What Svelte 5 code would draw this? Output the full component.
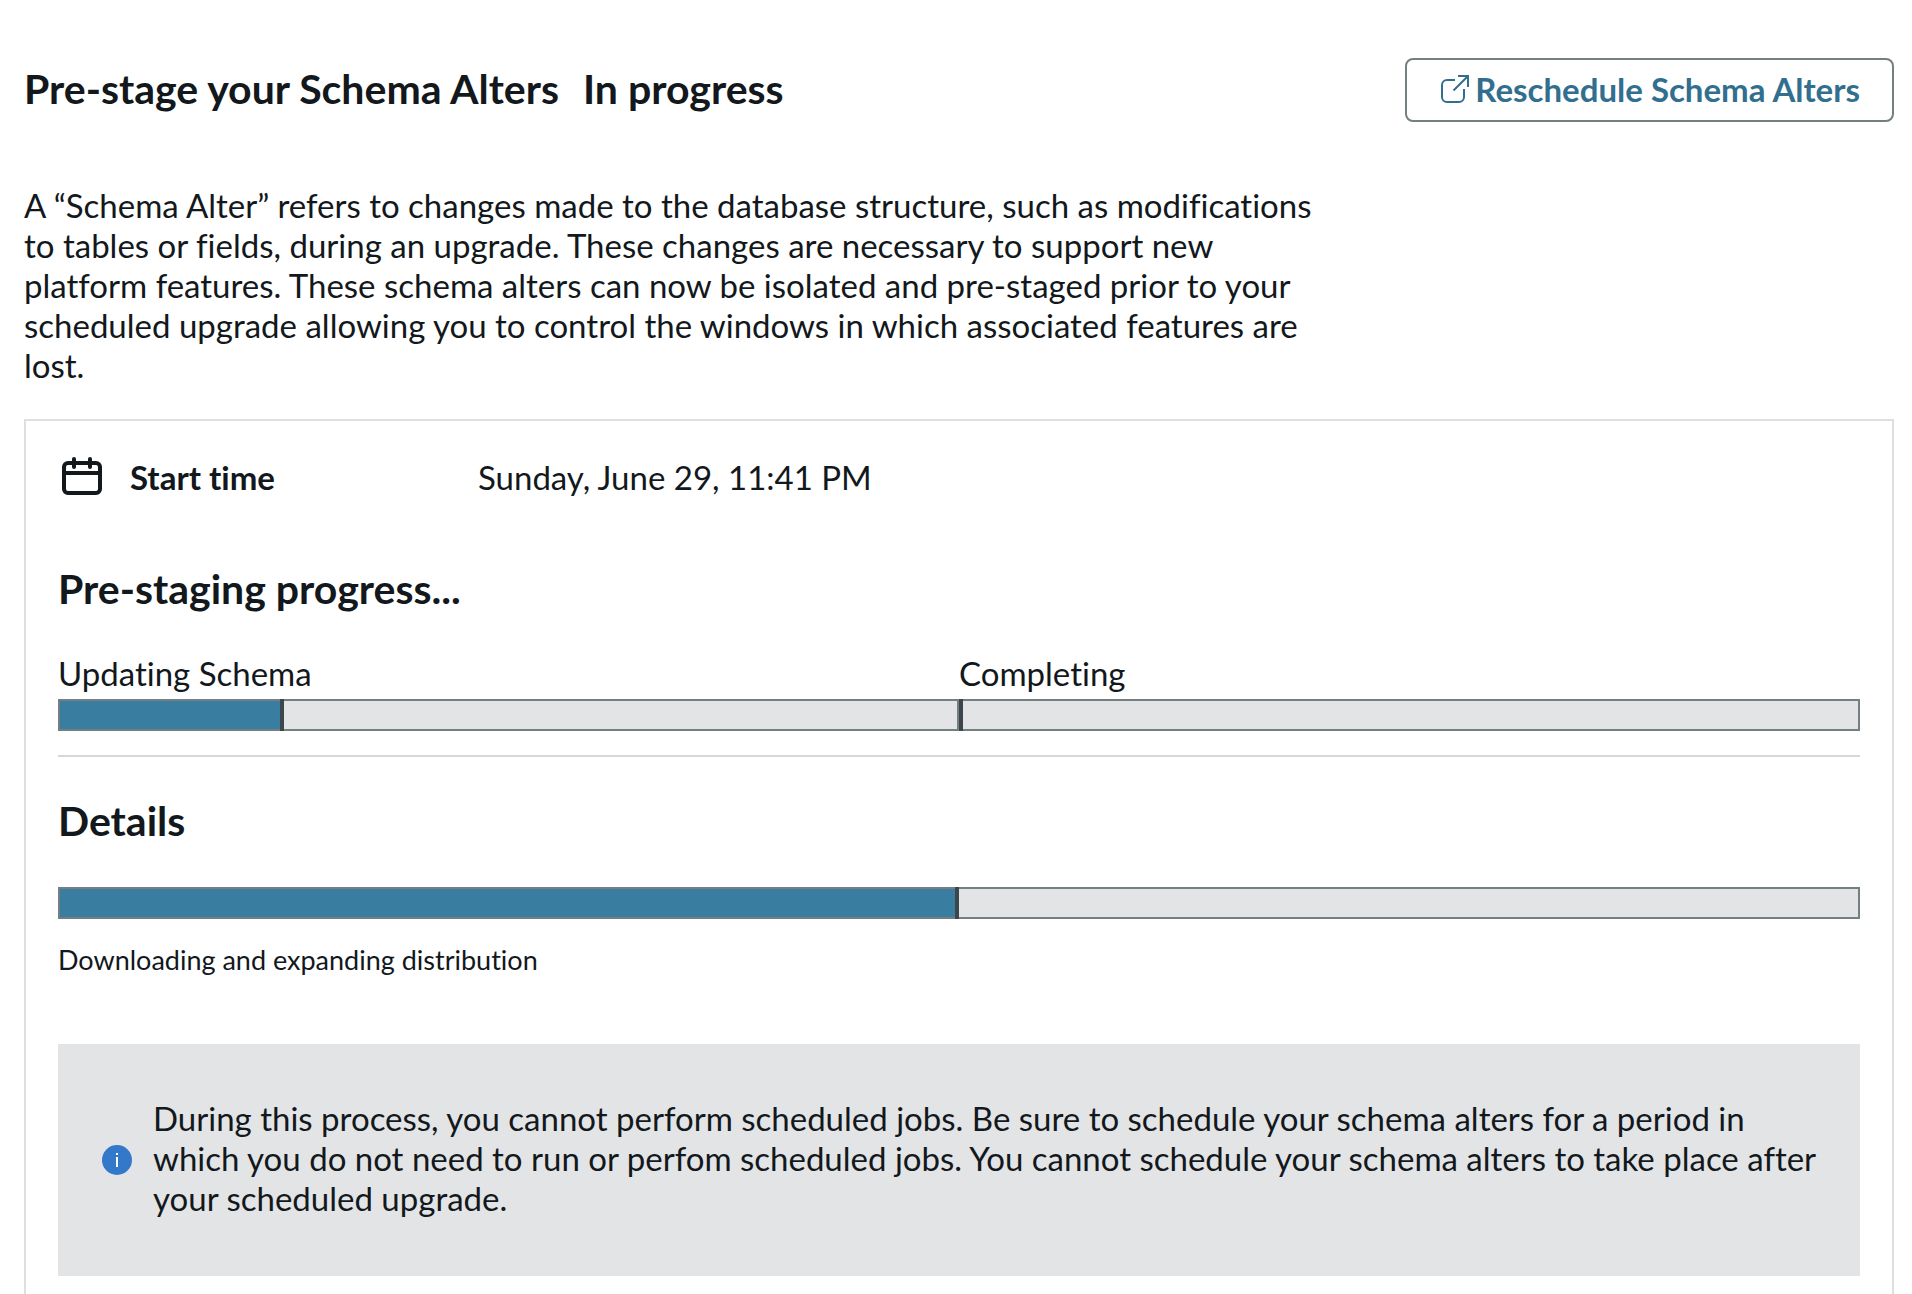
<script lang="ts">
  interface Stage {
    label: string;
    percent: number;
  }

  const stages: Stage[] = [
    { label: "Updating Schema", percent: 25 },
    { label: "Completing", percent: 0 }
  ];

  const details: Stage = { label: "Downloading and expanding distribution", percent: 50 };

  function reschedule() {
    window.dispatchEvent(new CustomEvent("reschedule"));
  }
</script>

{#snippet bar(stage: Stage)}
  <div
    class="bar"
    role="progressbar"
    aria-label={stage.label}
    aria-valuemin="0"
    aria-valuemax="100"
    aria-valuenow={stage.percent}
  >
    <div class="bar__fill" style:width="{stage.percent}%"></div>
    <div class="bar__marker" style:left="max(-2px, calc({stage.percent}% - 4px))"></div>
  </div>
{/snippet}

<main class="page">
  <header class="header">
    <div class="header__titles">
      <h1>Pre-stage your Schema Alters</h1>
      <span class="header__status">In progress</span>
    </div>
    <button class="reschedule" type="button" onclick={reschedule}>
      <svg width="28" height="28" viewBox="0 0 28 28" fill="none" stroke="currentColor" stroke-width="2" aria-hidden="true">
        <path d="M14 5H6a5 5 0 0 0-5 5v12a5 5 0 0 0 5 5h12a5 5 0 0 0 5-5v-8" />
        <path d="M17 1h10v11M27 1 12.5 15.5" />
      </svg>
      Reschedule Schema Alters
    </button>
  </header>

  <p class="intro">
    A “Schema Alter” refers to changes made to the database structure, such as modifications to
    tables or fields, during an upgrade. These changes are necessary to support new platform
    features. These schema alters can now be isolated and pre-staged prior to your scheduled
    upgrade allowing you to control the windows in which associated features are lost.
  </p>

  <section class="card">
    <dl class="start">
      <dt>
        <svg width="48" height="48" viewBox="0 0 48 48" fill="none" stroke="currentColor" stroke-width="4" aria-hidden="true">
          <rect x="6" y="10" width="36" height="30" rx="4" />
          <path d="M6 20h36" />
          <path d="M16 6v8M32 6v8" stroke-linecap="round" />
        </svg>
        Start time
      </dt>
      <dd>Sunday, June 29, 11:41 PM</dd>
    </dl>

    <h2>Pre-staging progress...</h2>
    <div class="stages">
      {#each stages as stage (stage.label)}
        <div class="stage">
          <span class="stage__label">{stage.label}</span>
          {@render bar(stage)}
        </div>
      {/each}
    </div>

    <hr />

    <h2>Details</h2>
    <div class="details">
      {@render bar(details)}
      <p class="details__text">{details.label}</p>
    </div>

    <div class="notice">
      <svg class="notice__icon" width="30" height="30" viewBox="0 0 30 30" aria-hidden="true">
        <circle cx="15" cy="15" r="15" fill="#3478c9" />
        <path d="M15 12v10M15 8v2" stroke="#fff" stroke-width="2" />
      </svg>
      <p>
        During this process, you cannot perform scheduled jobs. Be sure to schedule your schema
        alters for a period in which you do not need to run or perfom scheduled jobs. You cannot
        schedule your schema alters to take place after your scheduled upgrade.
      </p>
    </div>
  </section>
</main>

<style>
  :global(body) {
    background: #fff;
  }

  .page {
    padding: 58px 18px 0 24px;
    font-family: Lato, "Open Sans", sans-serif;
    font-size: 33px;
    font-variant-ligatures: none;
    line-height: 40px;
    color: #12181c;
  }

  .header {
    display: flex;
    align-items: center;
    justify-content: space-between;
    gap: 24px;
  }

  .header__titles {
    display: flex;
    flex-wrap: wrap;
    gap: 0 24px;
    padding-bottom: 2px;
  }

  h1,
  h2,
  .header__status {
    margin: 0;
    font-size: 41px;
    font-weight: 700;
    line-height: 48px;
  }

  .reschedule {
    display: flex;
    align-items: center;
    gap: 6px;
    padding: 9px 32px 11px 34px;
    border: 2px solid #747f82;
    border-radius: 8px;
    background: #fff;
    color: #326f8f;
    font: inherit;
    font-variant-ligatures: none;
    font-weight: 700;
    cursor: pointer;
  }

  .intro {
    width: 70%;
    margin: 63px 0 34px;
  }

  .card {
    padding: 32px 32px 48px;
    border: 2px solid #dedfe0;
  }

  .start {
    display: flex;
    align-items: center;
    margin: 0 0 64px;
  }

  .start dt {
    display: flex;
    align-items: center;
    gap: 24px;
    width: 420px;
    font-weight: 700;
  }

  .start dd {
    margin: 0;
  }

  .stages {
    display: flex;
    margin-top: 40px;
  }

  .stage {
    flex: 1;
  }

  .stage__label {
    display: block;
    margin-bottom: 6px;
  }

  .bar {
    position: relative;
    box-sizing: border-box;
    height: 32px;
    border: 2px solid #747f82;
    background: #e3e4e6;
  }

  .bar__fill {
    height: 100%;
    background: #397ea0;
  }

  .bar__marker {
    position: absolute;
    top: -2px;
    bottom: -2px;
    width: 4px;
    background: #3d464b;
  }

  hr {
    height: 2px;
    margin: 24px 0 40px;
    border: 0;
    background: #d6d7dc;
  }

  .details {
    margin-top: 42px;
  }

  .details__text {
    margin: 23px 0 66px;
    font-size: 27px;
    line-height: 36px;
  }

  .notice {
    display: flex;
    align-items: center;
    gap: 21px;
    padding: 54px 36px 54px 44px;
    background: #e3e4e6;
  }

  .notice__icon {
    flex: none;
  }

  .notice p {
    margin: 0;
    padding-bottom: 4px;
  }
</style>
